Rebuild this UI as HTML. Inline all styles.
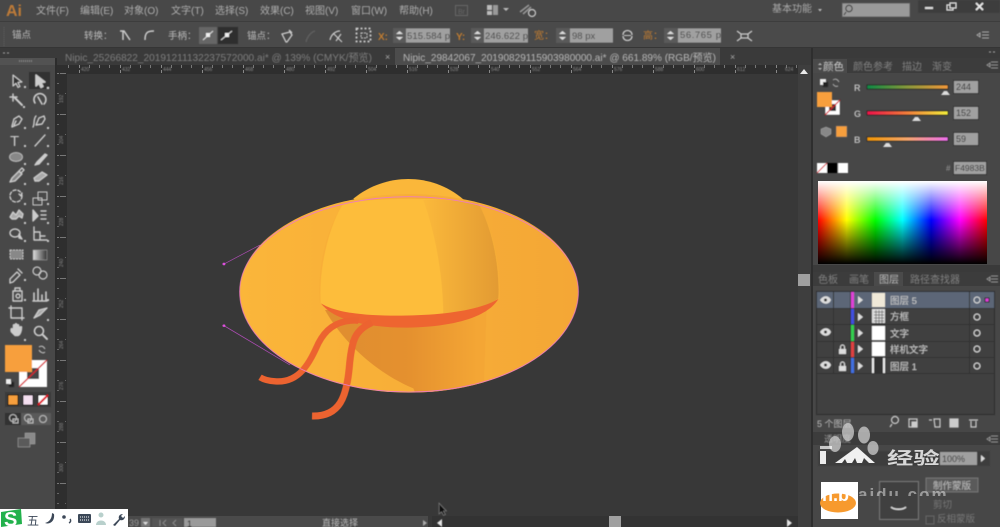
<!DOCTYPE html>
<html><head><meta charset="utf-8"><style>
html,body{margin:0;padding:0;background:#383838;width:1000px;height:527px;overflow:hidden}
svg{display:block}
text{font-family:"Liberation Sans","Noto Sans CJK SC",sans-serif}
</style></head><body>
<svg width="1000" height="527" viewBox="0 0 1000 527" xmlns="http://www.w3.org/2000/svg">
<defs>
<filter id="b" x="-5%" y="-5%" width="110%" height="110%"><feGaussianBlur stdDeviation=".42"/></filter>
<pattern id="hr" width="41" height="10" patternUnits="userSpaceOnUse" x="79"><rect x="0" y="0" width="1" height="8" fill="#888"/><rect x="10" y="5" width="1" height="3" fill="#777"/><rect x="20" y="4" width="1" height="4" fill="#777"/><rect x="30" y="5" width="1" height="3" fill="#777"/></pattern>
<pattern id="vr" width="10" height="41" patternUnits="userSpaceOnUse" y="73"><rect x="0" y="0" width="9" height="1" fill="#777"/><rect x="6" y="10" width="3" height="1" fill="#666"/><rect x="5" y="20" width="4" height="1" fill="#666"/><rect x="6" y="30" width="3" height="1" fill="#666"/></pattern>
<linearGradient id="hue"><stop offset="0" stop-color="#f00"/><stop offset=".17" stop-color="#ff0"/><stop offset=".34" stop-color="#0f0"/><stop offset=".5" stop-color="#0ff"/><stop offset=".67" stop-color="#00f"/><stop offset=".84" stop-color="#f0f"/><stop offset="1" stop-color="#f00"/></linearGradient>
<linearGradient id="wb" x2="0" y2="1"><stop offset="0" stop-color="#fff"/><stop offset=".47" stop-color="#fff" stop-opacity="0"/><stop offset=".47" stop-color="#000" stop-opacity="0"/><stop offset="1" stop-color="#000"/></linearGradient>
<linearGradient id="sr"><stop offset="0" stop-color="#0d8a45"/><stop offset=".5" stop-color="#8a9a3c"/><stop offset="1" stop-color="#f59a3a"/></linearGradient>
<linearGradient id="sg"><stop offset="0" stop-color="#f0104a"/><stop offset=".5" stop-color="#f4803a"/><stop offset="1" stop-color="#f4f03a"/></linearGradient>
<linearGradient id="sb"><stop offset="0" stop-color="#f49800"/><stop offset=".5" stop-color="#f8a870"/><stop offset="1" stop-color="#f070f0"/></linearGradient>
<linearGradient id="brim"><stop offset="0" stop-color="#fbb63a"/><stop offset="1" stop-color="#f4a736"/></linearGradient>
<linearGradient id="cr" x1="640" x2="870" y1="0" y2="0" gradientUnits="userSpaceOnUse"><stop offset="0" stop-color="#fbb93b"/><stop offset="1" stop-color="#e29a33"/></linearGradient>
<linearGradient id="sh" x1="400" x2="800" y1="0" y2="0" gradientUnits="userSpaceOnUse"><stop offset="0" stop-color="#e08e30"/><stop offset=".5" stop-color="#e5912f"/><stop offset="1" stop-color="#f4a635"/></linearGradient>
<linearGradient id="grad"><stop offset="0" stop-color="#ddd"/><stop offset="1" stop-color="#333"/></linearGradient>
<clipPath id="brimclip"><path d="M89 365A508 293 0 0 1 1105 365A508 303 0 0 1 89 365z"/></clipPath>
<clipPath id="wmclip"><rect x="855" y="480" width="120" height="16"/></clipPath>
</defs>

<!-- base panels -->
<rect width="1000" height="527" fill="#383838"/>
<rect width="1000" height="22" fill="#484848"/>
<rect y="22" width="1000" height="26" fill="#4a4a4a"/>
<rect y="21" width="1000" height="1" fill="#3d3d3d"/>
<rect y="47" width="1000" height="2" fill="#353535"/>
<rect y="48" width="811" height="17" fill="#3a3a3a"/>
<rect x="395" y="48" width="325" height="17" fill="#4c4c4c"/>
<rect x="57" y="65" width="754" height="9" fill="#2e2e2e"/>
<rect x="57" y="65" width="754" height="8" fill="url(#hr)"/>
<rect x="57" y="65" width="10" height="462" fill="#2e2e2e"/>
<rect x="57" y="73" width="9" height="454" fill="url(#vr)"/>
<rect x="0" y="48" width="57" height="479" fill="#484848"/>
<rect x="55" y="48" width="2" height="479" fill="#2c2c2c"/>
<rect x="0" y="48" width="57" height="10" fill="#3a3a3a"/>
<rect x="0" y="58" width="55" height="7" fill="#525252"/>

<g filter="url(#b)">
<!-- menu -->
<text x="6" y="16" font-size="16" fill="#bd7a38" font-weight="bold">Ai</text>
<g font-size="10" fill="#aeaeae">
<text x="36" y="14">文件(F)</text><text x="80" y="14">编辑(E)</text><text x="124" y="14">对象(O)</text><text x="171" y="14">文字(T)</text><text x="215" y="14">选择(S)</text><text x="260" y="14">效果(C)</text><text x="305" y="14">视图(V)</text><text x="351" y="14">窗口(W)</text><text x="399" y="14">帮助(H)</text>
</g>
<rect x="455.5" y="5.5" width="12" height="10" fill="none" stroke="#666"/><text x="458" y="14" font-size="7" fill="#666">Br</text>
<g fill="#bbb"><rect x="487" y="5" width="5" height="5"/><rect x="487" y="11" width="5" height="4"/><rect x="493" y="5" width="5" height="10" fill="#999"/></g>
<path d="M503 8l3 3 3-3z" fill="#bbb"/>
<path d="M520 12l9-7M523 14l8-7" stroke="#999" stroke-width="1.5"/><circle cx="532" cy="13" r="3.5" fill="none" stroke="#ccc" stroke-width="1.2"/>
<text x="772" y="12" font-size="10" fill="#aaa">基本功能</text>
<path d="M818 9l4 0-2 2.500z" fill="#bbb"/>
<rect x="842" y="3" width="68" height="14" fill="#9a9a9a" stroke="#555"/>
<circle cx="849" cy="8.500" r="3.200" fill="none" stroke="#333"/><path d="M846 12l-2 3" stroke="#333"/>
<rect x="918" y="0" width="82" height="13" fill="#3e3e3e" rx="1.500"/>
<rect x="925" y="7" width="8" height="2" fill="#ddd"/>
<rect x="947" y="5" width="6" height="5" fill="none" stroke="#ddd"/><rect x="950" y="3" width="6" height="5" fill="#3e3e3e" stroke="#ddd"/>
<path d="M976 3l7 7M983 3l-7 7" stroke="#eee" stroke-width="1.600"/>

<!-- control bar -->
<path d="M4 27v19" stroke="#666" stroke-dasharray="1 1"/>
<text x="12" y="38" font-size="9.500" fill="#bbb">锚点</text>
<text x="84" y="39" font-size="9.500" fill="#bbb">转换：</text>
<path d="M120 31l4 0 6 9M123 31v9" stroke="#ccc" stroke-width="1.500" fill="none"/>
<path d="M145 40c0-7 2-9 9-9" stroke="#ccc" stroke-width="1.500" fill="none"/>
<text x="168" y="39" font-size="9.500" fill="#bbb">手柄：</text>
<rect x="199" y="27" width="18" height="17" fill="#666"/><rect x="218" y="27" width="20" height="17" fill="#2f2f2f"/>
<path d="M203 40l10-9M221 40l11-9" stroke="#ddd" stroke-width="1"/><rect x="206" y="33" width="4" height="4" fill="#eee"/><rect x="225" y="33" width="4" height="4" fill="#eee"/>
<text x="247" y="39" font-size="9.500" fill="#bbb">锚点：</text>
<path d="M282 34l8-2 2 3-5 7-1 0z" fill="none" stroke="#ccc" stroke-width="1.300"/><path d="M289 30l3 3" stroke="#ccc" stroke-width="1.500"/>
<path d="M306 42c1-5 5-10 9-11" stroke="#5e5e5e" stroke-width="1.500" fill="none"/>
<path d="M330 40c1-5 5-9 10-9M334 34l8 8M341 34l-5 7" stroke="#ccc" stroke-width="1.200" fill="none"/>
<rect x="356.500" y="28.500" width="14" height="13" fill="none" stroke="#ccc" stroke-dasharray="2 2" stroke-width="1.800"/><rect x="361" y="33" width="6" height="5" fill="none" stroke="#ccc" stroke-dasharray="2 1"/>
<text x="378" y="40" font-size="10" fill="#c07c30" font-weight="bold">X:</text>
<rect x="393" y="28" width="57" height="15" fill="#5a5a5a"/><rect x="406" y="28.500" width="44" height="14" fill="#a0a0a0"/>
<path d="M396 34l3.500-3 3.500 3zM396 37l3.500 3 3.500-3z" fill="#ddd"/>
<text x="407" y="39" font-size="9.500" fill="#444" font-family="Liberation Mono" textLength="43">515.584 p</text>
<text x="456" y="40" font-size="10" fill="#c07c30" font-weight="bold">Y:</text>
<rect x="471" y="28" width="57" height="15" fill="#5a5a5a"/><rect x="484" y="28.500" width="44" height="14" fill="#a0a0a0"/>
<path d="M474 34l3.500-3 3.500 3zM474 37l3.500 3 3.500-3z" fill="#ddd"/>
<text x="485" y="39" font-size="9.500" fill="#444" font-family="Liberation Mono" textLength="43">246.622 p</text>
<text x="534" y="39" font-size="10" fill="#c07c30">宽：</text>
<rect x="556" y="28" width="57" height="15" fill="#5a5a5a"/><rect x="570" y="28.500" width="43" height="14" fill="#a0a0a0"/>
<path d="M559 34l3.500-3 3.500 3zM559 37l3.500 3 3.500-3z" fill="#ddd"/>
<text x="572" y="39" font-size="9.500" fill="#444" font-family="Liberation Mono">98 px</text>
<path d="M623 35c0-6 9-6 9 0M623 36c0 6 9 6 9 0" fill="none" stroke="#ccc" stroke-width="1.300"/><path d="M624 35.500h7" stroke="#ccc"/>
<text x="643" y="39" font-size="10" fill="#c07c30">高：</text>
<rect x="664" y="28" width="57" height="15" fill="#5a5a5a"/><rect x="678" y="28.500" width="43" height="14" fill="#a0a0a0"/>
<path d="M667 34l3.500-3 3.500 3zM667 37l3.500 3 3.500-3z" fill="#ddd"/>
<text x="680" y="38" font-size="9.500" fill="#444" font-family="Liberation Mono" textLength="41">56.765 p</text>
<path d="M737 31l4 3h7l4-3M737 41l4-3h7l4 3M741 34v4M748 34v4" fill="none" stroke="#ccc" stroke-width="1.300"/>
<path d="M977 35l3-2v4zM982 32h7M982 35h7M982 38h7" fill="none" stroke="#aaa"/>

<!-- tabs -->
<text x="65" y="61" font-size="10.500" fill="#7e7e7e" textLength="307" lengthAdjust="spacingAndGlyphs">Nipic_25266822_20191211132237572000.ai* @ 139% (CMYK/预览)</text>
<text x="385" y="60" font-size="9" fill="#aaa">×</text>
<text x="403" y="61" font-size="10.500" fill="#b8b8b8" textLength="313" lengthAdjust="spacingAndGlyphs">Nipic_29842067_20190829115903980000.ai* @ 661.89% (RGB/预览)</text>
<text x="730" y="60" font-size="9" fill="#aaa">×</text>
<path d="M3 53h2M7 53h2" stroke="#aaa"/>
<path d="M19 61h13" stroke="#888" stroke-width="2" stroke-dasharray="1 1"/>
<!-- ruler labels -->
<g font-size="5" fill="#888">
<text x="81" y="71">420</text><text x="122" y="71">432</text><text x="163" y="71">444</text><text x="204" y="71">456</text><text x="245" y="71">468</text><text x="286" y="71">480</text><text x="327" y="71">492</text><text x="368" y="71">504</text><text x="409" y="71">516</text><text x="450" y="71">528</text><text x="491" y="71">540</text><text x="532" y="71">552</text><text x="573" y="71">564</text><text x="614" y="71">576</text><text x="655" y="71">588</text><text x="696" y="71">600</text><text x="737" y="71">612</text><text x="785" y="71">624</text>
</g>
<g font-size="5" fill="#888">
<text transform="translate(63 103) rotate(-90)">192</text><text transform="translate(63 144) rotate(-90)">204</text><text transform="translate(63 185) rotate(-90)">216</text><text transform="translate(63 226) rotate(-90)">228</text><text transform="translate(63 267) rotate(-90)">240</text><text transform="translate(63 308) rotate(-90)">252</text><text transform="translate(63 349) rotate(-90)">264</text><text transform="translate(63 390) rotate(-90)">276</text><text transform="translate(63 431) rotate(-90)">288</text><text transform="translate(63 472) rotate(-90)">300</text>
</g>

<!-- tools -->
<rect x="29" y="72" width="21" height="17" fill="#333"/>
<g fill="none" stroke="#ccc" stroke-width="1.400" stroke-linejoin="round" stroke-linecap="round">
<path d="M13 75l0 11 3-2.500 2 4 2-1-2-4 4-.5z" fill="#333" stroke-width="1.200"/>
<path d="M36 75l0 11 3-2.500 2 4 2-1-2-4 4-.5z" fill="#ccc"/>
<path d="M15 98l7 7" stroke-width="2"/><path d="M13 94v7M10 97h7" stroke-width="1.500"/>
<path d="M35 103a6 6 0 1 1 9 1M38 97l4 7" stroke-width="1.600"/>
<path d="M12 126l2-7 5-3 3 3-3 5-7 3zM16 121l-2 4"/>
<path d="M33 127c2-3 0-8 3-11M36 125l3-7 5-2 1 3-3 5z"/>
<path d="M35 146l10-11"/>
<path d="M35 165l4-1 8-9-2-1-8 8z" fill="#ccc"/>
<path d="M10 182l2-4 7-7 3 3-7 7z" fill="#888"/><path d="M19 171l3-3 2 2-3 3"/>
<path d="M34 178l8-6 5 3-8 6h-4z" fill="#aaa"/>
<circle cx="16" cy="196" r="6" stroke-dasharray="3 2"/><path d="M22 193l-1 3-2-2"/>
<rect x="33" y="198" width="9" height="7" stroke-width="1"/><rect x="38" y="192" width="9" height="8" stroke-width="1"/>
<path d="M10 217l3-5 3 3 3-5 4 4-1 4-3-2-3 3-4 0z" fill="#aaa"/>
<path d="M33 210v11l5-5z" fill="#ccc"/><path d="M41 211h6M41 215h6M41 219h6" stroke-dasharray="2 1"/>
<ellipse cx="15" cy="233" rx="5" ry="4"/><path d="M19 234l3 5-3-1z" fill="#ccc"/>
<path d="M34 227v13h13M34 232h6v8M40 236h5" stroke-width="1.400"/>
<path d="M10 279l7-7 3 3-7 7-3 1zM18 269l4 4"/>
<circle cx="37" cy="271" r="4" stroke-width="1.200"/><circle cx="43" cy="275" r="4" stroke-width="1.200"/>
<rect x="13" y="291" width="9" height="10"/><circle cx="18" cy="296" r="2"/><path d="M15 291v-3h5v3"/>
<path d="M34 300v-7M38 300v-11M42 300v-5M46 300v-8M33 301h14" stroke-width="1.600"/>
<rect x="11" y="308" width="11" height="10"/><path d="M9 308h2M22 318h2M11 306v2M22 318v2"/>
<path d="M34 318l6-3 7-7-8 2z" fill="#aaa"/>
<path d="M11 332c-1-3 0-5 2-3v-4c0-1 2-1 2 0v-1c0-1 2-1 2 0v1c0-1 2-1 2 0v2c1-1 3-1 3 0 0 3-1 8-4 9h-3z" fill="#ccc" stroke-width=".6"/>
<circle cx="39" cy="331" r="4.500" stroke-width="1.600"/><path d="M43 335l4 4" stroke-width="2"/>
</g>
<text x="10" y="146" font-size="15" fill="#ccc" font-family="Liberation Serif">T</text>
<ellipse cx="16" cy="157" rx="6.500" ry="4.500" fill="#888" stroke="#bbb"/>
<rect x="10" y="250" width="13" height="9" fill="#888" stroke="#ccc" stroke-dasharray="2 1"/>
<rect x="33" y="250" width="14" height="10" fill="url(#grad)" stroke="#aaa" stroke-width=".5"/>
<g fill="#ccc"><rect x="24" y="86" width="2" height="2"/><rect x="47" y="87" width="2" height="2"/><rect x="23" y="106" width="2" height="2"/><rect x="24" y="127" width="2" height="2"/><rect x="47" y="127" width="2" height="2"/><rect x="24" y="145" width="2" height="2"/><rect x="47" y="145" width="2" height="2"/><rect x="24" y="163" width="2" height="2"/><rect x="47" y="163" width="2" height="2"/><rect x="24" y="183" width="2" height="2"/><rect x="47" y="183" width="2" height="2"/><rect x="24" y="203" width="2" height="2"/><rect x="47" y="203" width="2" height="2"/><rect x="24" y="222" width="2" height="2"/><rect x="47" y="222" width="2" height="2"/><rect x="24" y="240" width="2" height="2"/><rect x="47" y="240" width="2" height="2"/><rect x="24" y="279" width="2" height="2"/><rect x="24" y="299" width="2" height="2"/><rect x="47" y="299" width="2" height="2"/><rect x="47" y="319" width="2" height="2"/><rect x="24" y="339" width="2" height="2"/></g>

<!-- fill stroke -->
<rect x="19" y="360" width="28" height="27" fill="#fff"/>
<rect x="27" y="368" width="12" height="11" fill="#444"/>
<path d="M19 387l28-27" stroke="#d8202c" stroke-width="1.300"/>
<rect x="5" y="345" width="27" height="27" fill="#f79f3e"/>
<path d="M39 347c3-2 5 0 6 2M45 352c-2 2-5 0-6-2" stroke="#bbb" fill="none" stroke-width="1.200"/>
<rect x="9" y="382" width="5" height="5" fill="#222"/><rect x="6" y="379" width="5" height="5" fill="#eee"/>
<rect x="5" y="392" width="46" height="15" fill="#3a3a3a"/>
<rect x="8" y="395" width="10" height="10" fill="#f79f3e" stroke="#111"/><rect x="23" y="395" width="10" height="10" fill="#f4dff0" stroke="#111"/><rect x="38" y="395" width="10" height="10" fill="#fff" stroke="#111"/><path d="M38 405l10-10" stroke="#e01020" stroke-width="2"/>
<rect x="5" y="413" width="16" height="12" fill="#333"/><rect x="21" y="413" width="30" height="12" fill="#5a5a5a"/>
<g fill="none" stroke="#bbb"><circle cx="13" cy="418" r="3.500"/><rect x="13" y="419" width="5" height="4"/><circle cx="28" cy="418" r="3.500"/><rect x="28" y="419" width="5" height="4"/><circle cx="43" cy="419" r="3.500"/></g>
<rect x="25" y="433" width="10" height="11" fill="#8a8a8a" stroke="#aaa" stroke-width=".5"/><rect x="18" y="438" width="12" height="9" fill="#5a5a5a" stroke="#999" stroke-width=".7"/>
</g>

<!-- hat -->
<g transform="translate(210 170) scale(.33333)">
<path d="M430 86C480 45 540 27 595 27C650 27 710 45 760 88L700 130H480z" fill="#fab73a"/>
<path d="M89 365A508 293 0 0 1 1105 365A508 303 0 0 1 89 365z" fill="url(#brim)"/>
<g clip-path="url(#brimclip)">
<path d="M345 420C390 500 480 600 610 655L620 680H820L830 400z" fill="url(#sh)"/>
</g>
<path d="M400 105C350 170 320 300 330 400L600 460L870 385C870 280 850 170 805 105C700 85 500 85 400 105z" fill="#f8ae38"/>
<path d="M400 100C355 170 325 300 332 400C370 430 450 445 560 445C650 445 800 430 865 385C870 300 850 180 805 100C700 82 500 82 400 100z" fill="#fdbd3b"/>
<path d="M640 90C680 200 700 330 700 440C770 430 830 410 865 385C870 300 850 180 805 100C760 92 700 88 640 90z" fill="url(#cr)"/>
<path d="M333 400C380 430 470 437 560 437C680 437 800 425 865 387C840 430 760 470 590 473C470 473 370 450 333 400z" fill="#ee6530"/>
<path d="M445 452C390 448 350 470 325 520C300 575 270 640 195 634C175 633 160 628 150 622" fill="none" stroke="#ec6330" stroke-width="19"/>
<path d="M485 458C435 480 425 510 418 590C410 680 390 740 306 738" fill="none" stroke="#ec6330" stroke-width="21"/>
<path d="M89 365A508 285 0 0 1 1105 365A508 301 0 0 1 89 365z" fill="none" stroke="#ee7cc0" stroke-width="2.500"/>
<path d="M42 282L150 225M42 467L240 585" stroke="#c050c8" stroke-width="2"/>
<circle cx="42" cy="282" r="4" fill="#e050e0"/><circle cx="42" cy="467" r="4" fill="#e050e0"/>
</g>

<!-- vertical scrollbar -->
<rect x="798" y="65" width="13" height="462" fill="#3e3e3e"/>
<rect x="798" y="274" width="12" height="12" fill="#a0a0a0"/>
<path d="M800 74l4-5 4 5z" fill="#e8e8e8"/>

<!-- right panel -->
<rect x="811" y="48" width="189" height="479" fill="#474747"/>
<rect x="811" y="48" width="2" height="479" fill="#2e2e2e"/>
<rect x="813" y="48" width="187" height="10" fill="#3a3a3a"/>
<rect x="813" y="58" width="187" height="15" fill="#3c3c3c"/>
<rect x="813" y="59" width="34" height="14" fill="#4a4a4a"/>
<g filter="url(#b)">
<text x="823" y="70" font-size="10.500" fill="#ccc">颜色</text>
<path d="M818 65l2-2 2 2zM818 68l2 2 2-2z" fill="#bbb"/>
<g font-size="10" fill="#808080"><text x="853" y="70">颜色参考</text><text x="902" y="70">描边</text><text x="932" y="70">渐变</text></g>
<path d="M989 52h2M993 52h2" stroke="#aaa"/><path d="M987 65l3-2v4zM991 62h7M991 65h7M991 68h7" stroke="#999" fill="none"/>

<rect x="820" y="79" width="6" height="6" fill="#eee"/><rect x="823" y="82" width="5" height="5" fill="#222"/>
<path d="M833 80c3-2 5 0 6 2M838 86c-2 1-4 0-5-2" stroke="#aaa" fill="none"/>
<rect x="825" y="100" width="15" height="15" fill="#fff" stroke="#222" stroke-width=".5"/><rect x="829" y="104" width="7" height="7" fill="#333"/>
<path d="M825 115l15-15" stroke="#d8202c" stroke-width="1.200"/>
<rect x="817" y="92" width="15" height="15" fill="#f79f3e"/>
<path d="M821 129l5-2 5 2v5l-5 3-5-3z" fill="#888" stroke="#aaa" stroke-width=".5"/>
<rect x="836" y="126" width="11" height="11" fill="#f79f3e" stroke="#666" stroke-width=".5"/>
<text x="854" y="91" font-size="9" fill="#bbb" font-weight="bold">R</text>
<text x="854" y="117" font-size="9" fill="#bbb" font-weight="bold">G</text>
<text x="854" y="143" font-size="9" fill="#bbb" font-weight="bold">B</text>
<rect x="867" y="85" width="81" height="4" fill="url(#sr)" stroke="#222" stroke-width=".8"/>
<rect x="867" y="111" width="81" height="4" fill="url(#sg)" stroke="#222" stroke-width=".8"/>
<rect x="867" y="137" width="81" height="4" fill="url(#sb)" stroke="#222" stroke-width=".8"/>
<path d="M941 95l3-4 3 0 3 4z M912 121l3-4 3 0 3 4z M883 147l3-4 3 0 3 4z" fill="#ddd"/>
<g fill="#a0a0a0" stroke="#333"><rect x="953.500" y="80.500" width="25" height="13"/><rect x="953.500" y="106.500" width="25" height="13"/><rect x="953.500" y="132.500" width="25" height="13"/><rect x="953.500" y="161.500" width="33" height="13"/></g>
<g font-size="9" fill="#333" font-family="Liberation Mono"><text x="956" y="90">244</text><text x="956" y="116">152</text><text x="956" y="142">59</text><text x="955" y="171" font-size="8.500">F4983B</text></g>
<text x="946" y="171" font-size="8" fill="#999">#</text>
<rect x="817" y="163" width="10" height="10" fill="#fff"/><path d="M817 173l10-10" stroke="#d8202c"/><rect x="827" y="163" width="10" height="10" fill="#000"/><rect x="838" y="163" width="10" height="10" fill="#fff"/>
</g>
<rect x="818" y="181" width="169" height="83" fill="url(#hue)"/>
<rect x="818" y="181" width="169" height="83" fill="url(#wb)"/>
<rect x="813" y="265" width="187" height="7" fill="#3a3a3a"/>

<!-- layers -->
<rect x="813" y="272" width="187" height="14" fill="#3c3c3c"/>
<rect x="874" y="272" width="29" height="14" fill="#4a4a4a"/>
<g filter="url(#b)">
<g font-size="10" fill="#808080"><text x="818" y="283">色板</text><text x="849" y="283">画笔</text><text x="879" y="283" fill="#bbb">图层</text><text x="910" y="283">路径查找器</text></g>
<path d="M987 279l3-2v4zM991 276h7M991 279h7M991 282h7" stroke="#999" fill="none"/>
<rect x="816.500" y="291.500" width="178" height="123" fill="#414141" stroke="#2e2e2e"/>
<rect x="817" y="292" width="177" height="16" fill="#5b6677"/>
<g stroke="#333" fill="none"><path d="M817 308.500h177M817 324.500h177M817 341.500h177M817 357.500h177M817 373.500h177"/><path d="M833.500 292v82M850.500 292v82M969.500 292v82"/></g>
<rect x="851" y="292" width="3" height="16" fill="#e040d8"/><rect x="851" y="309" width="3" height="15" fill="#4050e0"/><rect x="851" y="325" width="3" height="16" fill="#30d050"/><rect x="851" y="342" width="3" height="15" fill="#e04040"/><rect x="851" y="358" width="3" height="15" fill="#4070e0"/>
<path d="M858 296l5 4-5 4zM858 313l5 4-5 4zM858 329l5 4-5 4zM858 345l5 4-5 4zM858 362l5 4-5 4z" fill="#ddd"/>
<rect x="872" y="293" width="13" height="14" fill="#efe8d8"/><rect x="872" y="309" width="13" height="14" fill="#ddd"/><path d="M874 312h10M874 315h10M874 318h10M874 321h10M876 310v13M879 310v13M882 310v13" stroke="#666" stroke-width=".7"/>
<rect x="872" y="326" width="13" height="14" fill="#fff"/><rect x="872" y="342" width="13" height="14" fill="#fff"/>
<rect x="872" y="358" width="13" height="15" fill="#333"/><rect x="872" y="358" width="2" height="15" fill="#eee"/><rect x="883" y="358" width="2" height="15" fill="#eee"/>
<g font-size="9.500" fill="#ccc"><text x="890" y="304">图层 5</text><text x="890" y="320">方框</text><text x="890" y="337">文字</text><text x="890" y="353">样机文字</text><text x="890" y="370">图层 1</text></g>
<g fill="none" stroke="#ddd"><circle cx="977" cy="300" r="3"/><circle cx="977" cy="317" r="3"/><circle cx="977" cy="333" r="3"/><circle cx="977" cy="349" r="3"/><circle cx="977" cy="366" r="3"/></g>
<rect x="985" y="298" width="4" height="4" fill="#e040d8" stroke="#222"/>
<g fill="#ddd"><path d="M820 300c3-5 9-5 11 0c-2 5-8 5-11 0z"/><path d="M820 332c3-5 9-5 11 0c-2 5-8 5-11 0z"/><path d="M820 365c3-5 9-5 11 0c-2 5-8 5-11 0z"/></g>
<g fill="#333"><circle cx="825.500" cy="300" r="1.500"/><circle cx="825.500" cy="332" r="1.500"/><circle cx="825.500" cy="365" r="1.500"/></g>
<g fill="#ddd"><rect x="839" y="349" width="7" height="5"/><rect x="839" y="366" width="7" height="5"/></g>
<path d="M840.500 349v-2a2 2 0 0 1 4 0v2M840.500 366v-2a2 2 0 0 1 4 0v2" fill="none" stroke="#ddd"/>
<text x="817" y="427" font-size="9" fill="#bbb">5 个图层</text>
<g fill="none" stroke="#ccc" stroke-width="1.200"><circle cx="895" cy="420" r="3.500"/><path d="M892 424l-2 3"/><rect x="909" y="419" width="8" height="8"/><rect x="912" y="422" width="5" height="5" fill="#ccc"/><path d="M929 420h3M934 419h6v8h-5z"/><rect x="950" y="419" width="8" height="8" fill="#ccc"/><path d="M969 420h9M971 421v6h5v-6"/></g>
</g>
<rect x="813" y="432" width="187" height="13" fill="#3c3c3c"/>
<rect x="813" y="445" width="187" height="82" fill="#474747"/>
<g filter="url(#b)">
<text x="824" y="442" font-size="9" fill="#999">透明度</text>
<path d="M987 439l3-2v4zM991 436h7M991 439h7M991 442h7" stroke="#999" fill="none"/>
<rect x="818" y="451" width="172" height="15" fill="#3c3c3c"/>
<rect x="940" y="452" width="37" height="13" fill="#a0a0a0"/><text x="942" y="462" font-size="9" fill="#333">100%</text>
<path d="M981 455l4 3.500-4 3.500z" fill="#ddd"/>
<rect x="926" y="478" width="52" height="14" fill="#5a5a5a" stroke="#777"/><text x="933" y="489" font-size="9.500" fill="#bbb">制作蒙版</text>
<rect x="879.500" y="481.500" width="39" height="38" fill="#404040" stroke="#777"/><path d="M891 507c3 3 12 3 15 0" stroke="#ddd" fill="none" stroke-width="1.500"/>
<text x="933" y="508" font-size="9.500" fill="#777">剪切</text>
<rect x="926" y="516" width="8" height="8" fill="#444" stroke="#666"/><text x="937" y="522" font-size="9.500" fill="#777">反相蒙版</text>
</g>
<!-- watermark -->
<g fill="#cfcfcf" opacity=".75">
<ellipse cx="848" cy="432" rx="6" ry="9"/><ellipse cx="864" cy="435" rx="6" ry="8.500"/><ellipse cx="835" cy="444" rx="6" ry="8"/><ellipse cx="873" cy="448" rx="5.500" ry="7"/>
</g>
<rect x="821" y="482" width="37" height="37" fill="#fff"/>
<ellipse cx="838" cy="503" rx="18" ry="9.500" fill="#f79a2e"/>
<g fill="#fff">
<path d="M857 447l18 16h-6l-5-5-2 5h-5l-2-5-3 5h-5l-2-4-3 4h-7z" opacity=".92"/>
<rect x="820" y="451" width="6" height="13" opacity=".9"/>
<rect x="820" y="446" width="12" height="3" opacity=".7"/>
<text transform="translate(887 464) scale(1.550 1)" font-size="17" font-weight="bold" fill="#fff" opacity=".8">经验</text>
<text x="822" y="501" font-size="18" font-weight="bold" fill="#fff">n.b</text>
<g clip-path="url(#wmclip)"><text x="858" y="500" font-size="17" font-weight="bold" fill="#fff" opacity=".45" letter-spacing="2">aidu.com</text></g>
</g>

<!-- status bar -->
<rect x="128" y="516" width="300" height="11" fill="#4a4a4a"/>
<rect x="432" y="516" width="366" height="11" fill="#333"/>
<rect x="609" y="516" width="12" height="11" fill="#a0a0a0"/>
<g filter="url(#b)">
<text x="129" y="526" font-size="9" fill="#999">39</text>
<rect x="141" y="518" width="9" height="9" fill="#777"/><path d="M143 522h5l-2.500 3z" fill="#ddd"/>
<rect x="152" y="518" width="31" height="9" fill="#555"/>
<path d="M160 520v6M166 520l-3 3 3 3M176 520l-3 3 3 3" stroke="#888" fill="none"/>
<rect x="184" y="518" width="32" height="9" fill="#9a9a9a"/><text x="187" y="527" font-size="9" fill="#222">1</text>
<text x="322" y="526" font-size="9" fill="#bbb">直接选择</text>
<path d="M423 520l4 3-4 3z" fill="#aaa"/>
<path d="M442 519l-5 4 5 4zM787 519l5 4-5 4z" fill="#e4e4e4"/>
<path d="M439 503v11l2.500-2 2 3.500 2-1-2-3.500h3z" fill="#111" stroke="#888" stroke-width=".6"/>
</g>

<!-- IME bar -->
<rect x="0" y="509" width="128" height="18" fill="#fff"/>
<path d="M1 512L21 509l1 15-21 3z" fill="#22b14c"/>
<text x="4" y="526" font-size="20" font-weight="bold" fill="#fff">S</text>
<text x="27" y="525" font-size="12" fill="#3c4858">五</text>
<path d="M52 513c0 6-3 9-7 10c6 2 10-3 9-9z" fill="#3c4858"/>
<circle cx="64" cy="517" r="1.800" fill="#3c4858"/><path d="M70 519c1 1 1 3-1 4" stroke="#3c4858" stroke-width="1.500" fill="none"/>
<rect x="78" y="514" width="13" height="9" rx="1" fill="#3c4858"/><path d="M80 517h9M80 520h9" stroke="#fff" stroke-dasharray="1 1"/>
<circle cx="101" cy="515" r="2.500" fill="#b8d0cc"/><path d="M96 525c0-6 10-6 10 0z" fill="#b8d0cc"/>
<path d="M113 525l6-6c-1-3 1-5 4-5l-2 2 2 2 2-2c0 3-2 5-5 4l-5 6z" fill="#3c4858"/>
</svg>
</body></html>
